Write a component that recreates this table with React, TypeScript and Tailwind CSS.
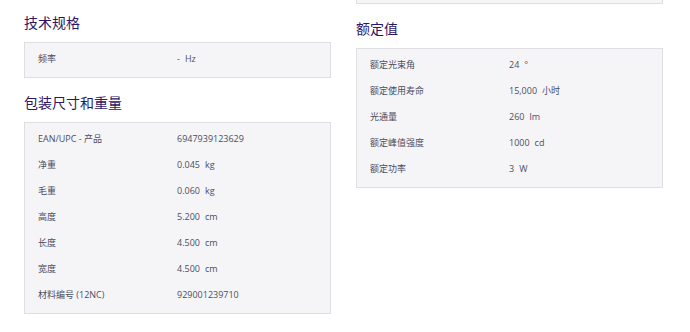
type Spec = { label: string; value: string; unit?: string };

const techSpecs: Spec[] = [{ label: "频率", value: "-", unit: "Hz" }];

const packageSpecs: Spec[] = [
  { label: "EAN/UPC - 产品", value: "6947939123629" },
  { label: "净重", value: "0.045", unit: "kg" },
  { label: "毛重", value: "0.060", unit: "kg" },
  { label: "高度", value: "5.200", unit: "cm" },
  { label: "长度", value: "4.500", unit: "cm" },
  { label: "宽度", value: "4.500", unit: "cm" },
  { label: "材料编号 (12NC)", value: "929001239710" },
];

const ratedSpecs: Spec[] = [
  { label: "额定光束角", value: "24", unit: "°" },
  { label: "额定使用寿命", value: "15,000", unit: "小时" },
  { label: "光通量", value: "260", unit: "lm" },
  { label: "额定峰值强度", value: "1000", unit: "cd" },
  { label: "额定功率", value: "3", unit: "W" },
];

const SpecBox = ({ rows }: { rows: Spec[] }) => (
  <div className="border border-[#dedee3] bg-[#f5f5f8] pl-[13px] pt-[3px] pb-[5px]">
    {rows.map((row) => (
      <div key={row.label} className="flex h-[26px] items-center text-[9px] text-[#4d4d5e]">
        <span className="w-[139px] shrink-0">{row.label}</span>
        <span>
          {row.value}
          {row.unit && <span className="ml-[5px]">{row.unit}</span>}
        </span>
      </div>
    ))}
  </div>
);

const SectionTitle = ({ children }: { children: string }) => (
  <h3 className="mb-[9px] h-[20px] text-[14px] leading-[20px] text-[#2c1665]">{children}</h3>
);

export default function App() {
  return (
    <div
      className="h-[332px] w-[690px] bg-white"
      style={{ fontFamily: '"Open Sans", "Noto Sans CJK SC", sans-serif' }}
    >
      <div className="grid grid-cols-[307px_307px] gap-x-[25px] pl-[24px]">
        <div className="pt-[13px]">
          <SectionTitle>技术规格</SectionTitle>
          <SpecBox rows={techSpecs} />
          <div className="mt-[15px]">
            <SectionTitle>包装尺寸和重量</SectionTitle>
            <SpecBox rows={packageSpecs} />
          </div>
        </div>
        <div>
          {/* tail of the box from the section above */}
          <div className="h-[4px] border-x border-b border-[#dedee3] bg-[#f5f5f8]" />
          <div className="mt-[15px]">
            <SectionTitle>额定值</SectionTitle>
            <SpecBox rows={ratedSpecs} />
          </div>
        </div>
      </div>
    </div>
  );
}
